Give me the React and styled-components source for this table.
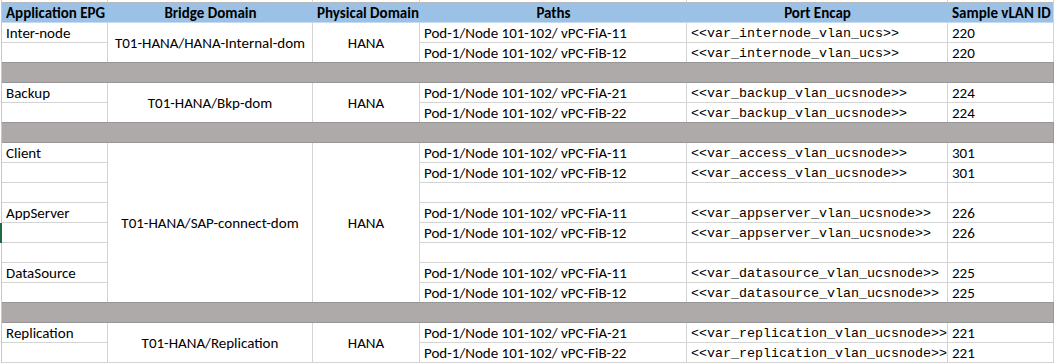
import React from 'react'
import styled, { createGlobalStyle } from 'styled-components'

const GlobalStyle = createGlobalStyle`
  body {
    margin: 0;
    background: #ffffff;
    font-family: Calibri, Carlito, Lato, "Liberation Sans", sans-serif;
  }
`

const GRID = '#d4d4d4'

const Sheet = styled.div`
  display: grid;
  grid-template-columns: 106px 205px 107px 267px 261px 106px;
  grid-template-rows: 3px 20px;
  grid-auto-rows: 20px;
  width: 1052px;
  margin-left: 1px;
  border-left: 1px solid #c8c8c8;
`

const Stub = styled.div`
  box-sizing: border-box;
  border-right: 1px solid ${GRID};
  border-bottom: 1px solid #b8b8b8;
`

const HeadCell = styled.div`
  box-sizing: border-box;
  background: #9bc2e6;
  border-bottom: 1px solid #c6dbef;
  border-right: ${p => (p.$last ? `1px solid ${GRID}` : 'none')};
  font-weight: bold;
  font-size: 15px;
  line-height: 20px;
  color: #000;
  padding: 0 4px;
  white-space: nowrap;
  overflow: hidden;
  text-align: ${p => p.$align || 'center'};
`

const Cell = styled.div`
  box-sizing: border-box;
  border-right: 1px solid ${GRID};
  border-bottom: 1px solid ${GRID};
  padding: 1px 4px 0;
  font-size: ${p => (p.$mono ? '13.33px' : '15px')};
  font-family: ${p => (p.$mono ? '"Liberation Mono", "Courier New", monospace' : 'inherit')};
  line-height: 19px;
  color: #000;
  white-space: nowrap;
  overflow: ${p => (p.$mono ? 'visible' : 'hidden')};
  box-shadow: ${p => (p.$active ? '-2px 0 0 #1f6b3f' : 'none')};
`

const MergedCell = styled.div`
  box-sizing: border-box;
  grid-row: span ${p => p.$span};
  border-right: 1px solid ${GRID};
  border-bottom: 1px solid ${GRID};
  display: flex;
  align-items: center;
  justify-content: center;
  font-size: 15px;
  color: #000;
  white-space: nowrap;
  padding-top: 1px;
`

const Band = styled.div`
  grid-column: 1 / -1;
  box-sizing: border-box;
  background: #aeaaaa;
  border-bottom: 1px solid #979797;
  border-right: 1px solid #979797;
  box-shadow: 0 -1px 0 #979797;
`

const vpc = n => `Pod-1/Node 101-102/ vPC-${n}`

const groups = [
  {
    bridge: 'T01-HANA/HANA-Internal-dom',
    rows: [
      ['Inter-node', vpc('FiA-11'), '<<var_internode_vlan_ucs>>', '220'],
      ['', vpc('FiB-12'), '<<var_internode_vlan_ucs>>', '220'],
    ],
  },
  {
    bridge: 'T01-HANA/Bkp-dom',
    rows: [
      ['Backup', vpc('FiA-21'), '<<var_backup_vlan_ucsnode>>', '224'],
      ['', vpc('FiB-22'), '<<var_backup_vlan_ucsnode>>', '224'],
    ],
  },
  {
    bridge: 'T01-HANA/SAP-connect-dom',
    rows: [
      ['Client', vpc('FiA-11'), '<<var_access_vlan_ucsnode>>', '301'],
      ['', vpc('FiB-12'), '<<var_access_vlan_ucsnode>>', '301'],
      ['', '', '', ''],
      ['AppServer', vpc('FiA-11'), '<<var_appserver_vlan_ucsnode>>', '226'],
      ['', vpc('FiB-12'), '<<var_appserver_vlan_ucsnode>>', '226', true],
      ['', '', '', ''],
      ['DataSource', vpc('FiA-11'), '<<var_datasource_vlan_ucsnode>>', '225'],
      ['', vpc('FiB-12'), '<<var_datasource_vlan_ucsnode>>', '225'],
    ],
  },
  {
    bridge: 'T01-HANA/Replication',
    rows: [
      ['Replication', vpc('FiA-21'), '<<var_replication_vlan_ucsnode>>', '221'],
      ['', vpc('FiB-22'), '<<var_replication_vlan_ucsnode>>', '221'],
    ],
  },
]

const headers = [
  ['Application EPG', 'left'],
  ['Bridge Domain'],
  ['Physical Domain'],
  ['Paths'],
  ['Port Encap'],
  ['Sample vLAN ID'],
]

function App() {
  return (
    <>
      <GlobalStyle />
      <Sheet>
        {headers.map(([label]) => (
          <Stub key={'stub-' + label} />
        ))}
        {headers.map(([label, align], i) => (
          <HeadCell key={label} $align={align} $last={i === headers.length - 1}>
            {label}
          </HeadCell>
        ))}
        {groups.map((group, gi) => (
          <React.Fragment key={group.bridge}>
            {gi > 0 && <Band />}
            {group.rows.map(([epg, path, encap, vlan, active], ri) => (
              <React.Fragment key={ri}>
                <Cell $active={active}>{epg}</Cell>
                {ri === 0 && (
                  <>
                    <MergedCell $span={group.rows.length}>{group.bridge}</MergedCell>
                    <MergedCell $span={group.rows.length}>HANA</MergedCell>
                  </>
                )}
                <Cell>{path}</Cell>
                <Cell $mono>{encap}</Cell>
                <Cell>{vlan}</Cell>
              </React.Fragment>
            ))}
          </React.Fragment>
        ))}
      </Sheet>
    </>
  )
}

export default App
